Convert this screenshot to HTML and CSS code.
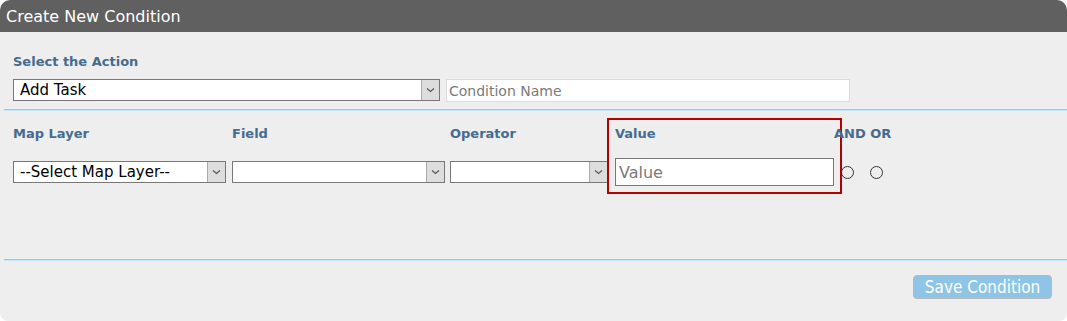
FILE: index.html
```html
<!DOCTYPE html>
<html>
<head>
<meta charset="utf-8">
<link rel="stylesheet" href="styles.css">
</head>
<body>
<div class="panel">
  <div class="header">Create New Condition</div>
  <div class="body">
    <div class="section-action">
      <div class="label">Select the Action</div>
      <div class="action-row">
        <div class="select select-action">
          <span class="select-text">Add Task</span>
          <span class="select-arrow"><svg width="9" height="6" viewBox="0 0 9 6"><path d="M1 1.5 L4.5 4.5 L8 1.5" fill="none" stroke="#555" stroke-width="1.2"/></svg></span>
        </div>
        <input class="text-input name-input" type="text" placeholder="Condition Name">
      </div>
    </div>
    <div class="divider"></div>
    <div class="section-cond">
      <div class="col col-layer">
        <div class="label">Map Layer</div>
        <div class="ctrl">
          <div class="select">
            <span class="select-text">--Select Map Layer--</span>
            <span class="select-arrow"><svg width="9" height="6" viewBox="0 0 9 6"><path d="M1 1.5 L4.5 4.5 L8 1.5" fill="none" stroke="#555" stroke-width="1.2"/></svg></span>
          </div>
        </div>
      </div>
      <div class="col col-field">
        <div class="label">Field</div>
        <div class="ctrl">
          <div class="select">
            <span class="select-text"></span>
            <span class="select-arrow"><svg width="9" height="6" viewBox="0 0 9 6"><path d="M1 1.5 L4.5 4.5 L8 1.5" fill="none" stroke="#555" stroke-width="1.2"/></svg></span>
          </div>
        </div>
      </div>
      <div class="col col-op">
        <div class="label">Operator</div>
        <div class="ctrl">
          <div class="select">
            <span class="select-text"></span>
            <span class="select-arrow"><svg width="9" height="6" viewBox="0 0 9 6"><path d="M1 1.5 L4.5 4.5 L8 1.5" fill="none" stroke="#555" stroke-width="1.2"/></svg></span>
          </div>
        </div>
      </div>
      <div class="col col-value">
        <div class="label">Value</div>
        <div class="ctrl">
          <input class="value-input" type="text" placeholder="Value">
        </div>
      </div>
      <div class="col col-andor">
        <div class="label">AND OR</div>
        <div class="ctrl radios">
          <input type="radio" name="andor" class="radio">
          <input type="radio" name="andor" class="radio">
        </div>
      </div>
    </div>
    <div class="divider"></div>
    <div class="footer">
      <button class="save-btn">Save Condition</button>
    </div>
  </div>
</div>
</body>
</html>
```
FILE: styles.css
```css
* { box-sizing: border-box; }
html, body { margin: 0; padding: 0; background: #ffffff; }
body { font-family: "DejaVu Sans", Verdana, sans-serif; }

.panel { width: 1067px; height: 321px; display: flex; flex-direction: column; }

.header {
  height: 32px;
  background: #606060;
  color: #ffffff;
  font-size: 16px;
  line-height: 33px;
  padding-left: 6px;
  border-radius: 10px 10px 0 0;
}

.body {
  flex: 1;
  background: #eeeeee;
  border-radius: 0 0 8px 8px;
  display: flex;
  flex-direction: column;
}

.label {
  font-size: 13px;
  font-weight: bold;
  color: #456b8f;
  line-height: 16px;
  height: 16px;
  white-space: nowrap;
}

.section-action { padding: 22px 0 7px 13px; }
.action-row { display: flex; gap: 6px; margin-top: 9px; }

.select {
  height: 22px;
  border: 1px solid #777777;
  background: #ffffff;
  display: flex;
  align-items: stretch;
  width: 100%;
}
.select-text {
  flex: 1;
  font-size: 15px;
  line-height: 20px;
  padding-left: 6px;
  color: #000;
  white-space: nowrap;
  overflow: hidden;
}
.select-arrow {
  width: 18px;
  background: #dddddd;
  border-left: 1px solid #aaaaaa;
  display: flex;
  align-items: center;
  justify-content: center;
}
.select-action { width: 427px; }

.text-input {
  font-family: inherit;
  font-size: 14px;
  border: 1px solid #dcdcdc;
  background: #ffffff;
  padding: 0 2px;
  outline: none;
}
.name-input { width: 404px; height: 23px; }
.text-input::placeholder { color: #7a7a7a; }

.divider {
  height: 2px;
  margin-left: 4px;
  border-top: 1px solid #87cefa;
  border-bottom: 1px solid #c4e6fb;
}

.section-cond {
  display: flex;
  align-items: flex-start;
  padding: 15px 0 0 13px;
  height: 148px;
}
.col { display: flex; flex-direction: column; gap: 16px; }
.ctrl { height: 28px; display: flex; align-items: center; }
.col-layer { width: 213px; margin-right: 6px; }
.col-field { width: 213px; margin-right: 5px; }
.col-op { width: 158px; margin-right: 7px; }
.col-value {
  width: 219px;
  outline: 2px solid #b30000;
  outline-offset: 6px;
}
.value-input {
  width: 219px;
  height: 28px;
  border: 1px solid #777777;
  background: #ffffff;
  font-family: inherit;
  font-size: 16px;
  padding: 0 3px;
  outline: none;
}
.value-input::placeholder { color: #7a7a7a; }

.radios { padding-left: 7px; gap: 16px; }
.radio {
  appearance: none;
  -webkit-appearance: none;
  margin: 0;
  width: 13px;
  height: 13px;
  border: 1px solid #333333;
  border-radius: 50%;
  background: transparent;
}

.footer {
  display: flex;
  justify-content: flex-end;
  padding: 14px 15px 0 0;
}
.save-btn {
  width: 139px;
  height: 24px;
  background: #8ec5e6;
  border: 1px solid #b8b8b8;
  border-radius: 4px;
  color: #ffffff;
  font-family: "DejaVu Sans Condensed", "DejaVu Sans", sans-serif;
  font-size: 17px;
  padding: 0;
  line-height: 22px;
}
```
